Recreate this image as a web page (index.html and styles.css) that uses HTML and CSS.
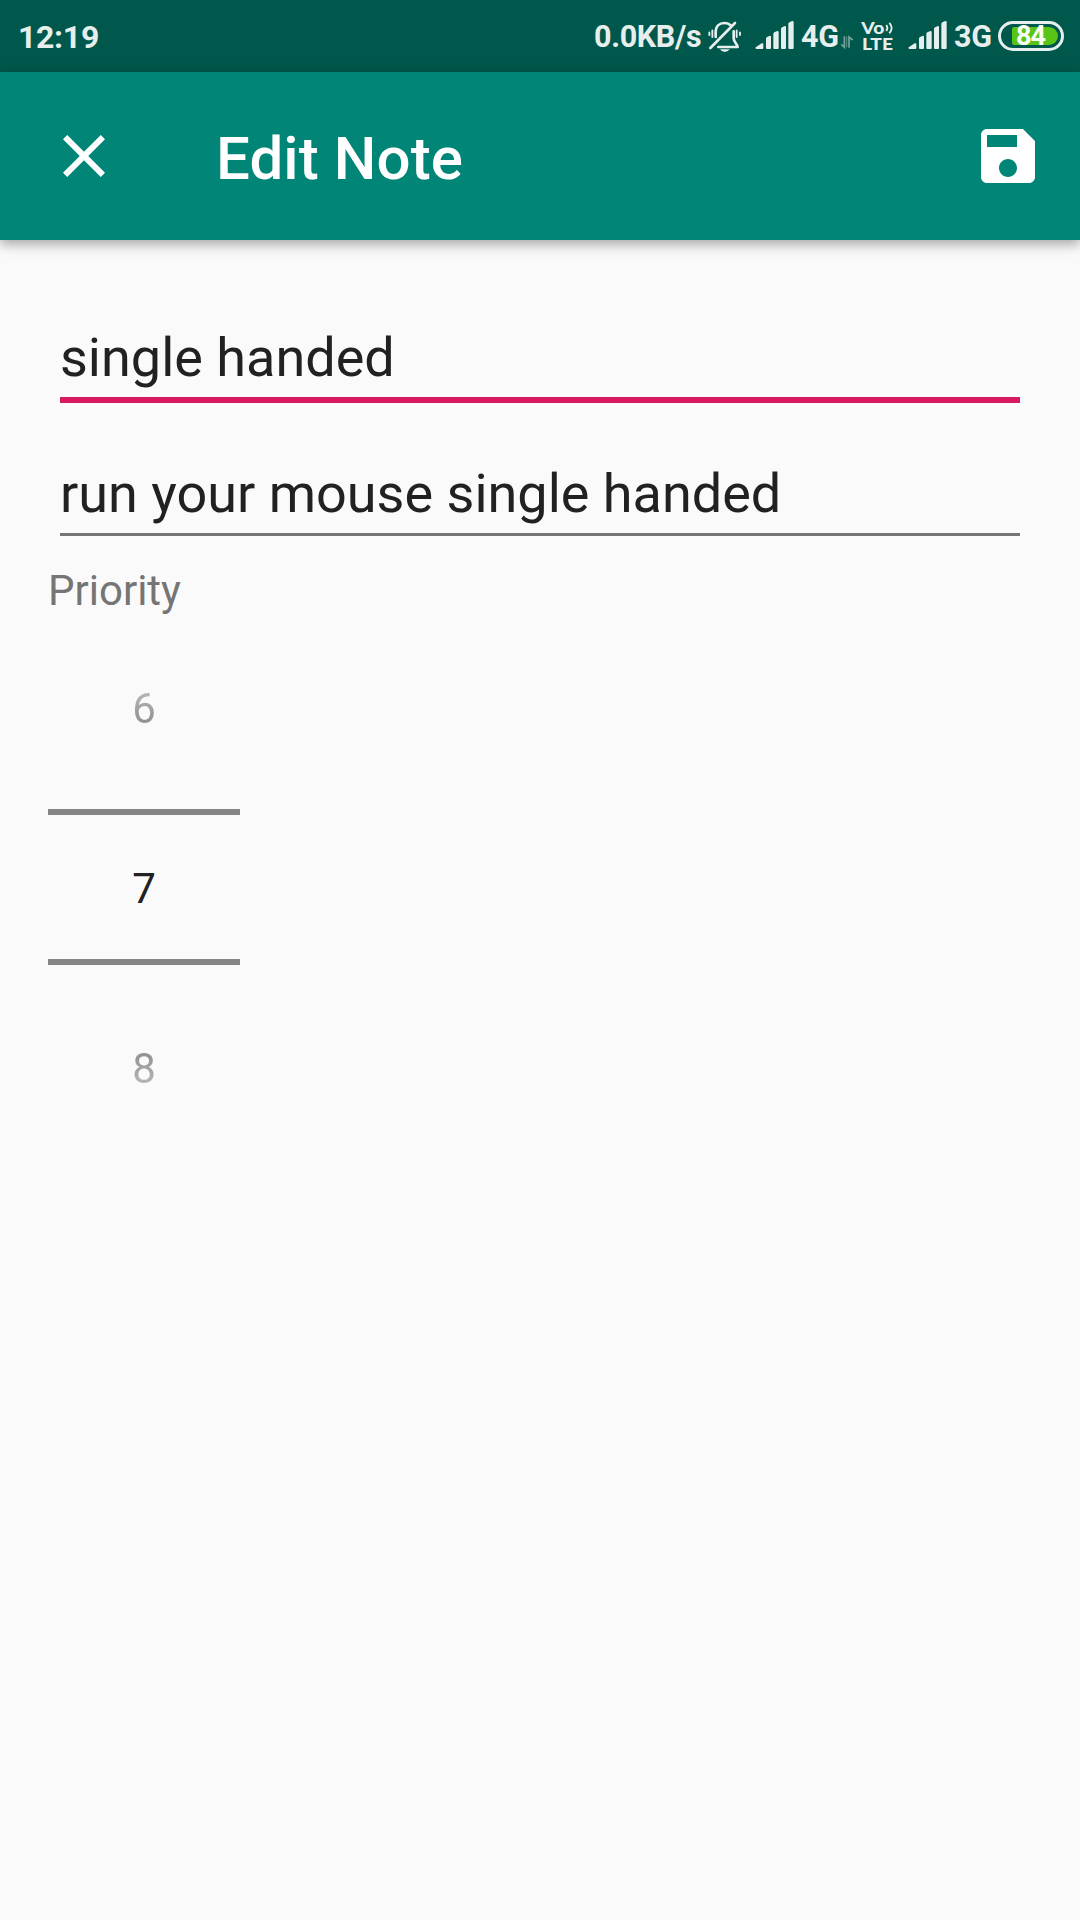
FILE: index.html
```
<!DOCTYPE html>
<html lang="en">
<head>
<meta charset="utf-8">
<title>Edit Note</title>
<link rel="stylesheet" href="styles.css">
</head>
<body>
<div class="status-bar">
  <span class="clock">12:19</span>
  <div class="indicators">
    <span class="speed">0.0KB/s</span>
    <svg class="bell" viewBox="384 60 105 99" aria-hidden="true">
      <g fill="none" stroke="currentColor" stroke-width="8" stroke-linecap="round">
        <path d="M465 69L391 144"/>
        <path d="M407 111V97C407 79 418 69 433 69C442 69 448 72 453 77"/>
        <path d="M461 94V115C461 127 472 131 473 141H415" stroke-linejoin="round"/>
        <path d="M388 97V105M397 91V111M470 91V111M480 97V105" stroke-width="5.500"/>
      </g>
      <path d="M420 148H449Q444 156 434.500 156Q425 156 420 148Z" fill="currentColor"/>
    </svg>
    <svg class="signal" viewBox="0 0 120 90" aria-hidden="true">
      <path d="M2 82L20 70Q25 68 25 73V84Q25 87 22 87H4Q0 86 2 82ZM33 56Q33 53 36 51L45 47Q48 47 48 50V84Q48 87 45 87H36Q33 87 33 84ZM55 42Q55 39 58 37L67 33Q71 33 71 36V84Q71 87 68 87H58Q55 87 55 84ZM78 27Q78 24 81 22L90 18Q93 18 93 21V84Q93 87 90 87H81Q78 87 78 84ZM100 12Q100 9 103 7L112 3Q116 3 116 6V84Q116 87 113 87H103Q100 87 100 84Z" fill="currentColor"/>
    </svg>
    <span class="network network-4g">4G</span>
    <svg class="arrows" viewBox="300 105 42 42" aria-hidden="true">
      <path d="M313 109V142L304 133M327 143V111L338 120" fill="none" stroke="currentColor" stroke-width="5"/>
      <path d="M320 109V142" fill="none" stroke="currentColor" stroke-width="2.500"/>
    </svg>
    <svg class="volte" viewBox="0 0 34 32" aria-hidden="true">
      <text x="0.300" y="13.500" textLength="23" lengthAdjust="spacingAndGlyphs">Vo</text>
      <text x="1" y="29.700" textLength="31" lengthAdjust="spacingAndGlyphs">LTE</text>
      <path d="M25.300 5Q27.500 8 25.300 11M28.300 2.800Q33 8 28.300 13.300" fill="none" stroke="currentColor" stroke-width="1.800"/>
    </svg>
    <svg class="signal signal-second" viewBox="0 0 120 90" aria-hidden="true">
      <path d="M2 82L20 70Q25 68 25 73V84Q25 87 22 87H4Q0 86 2 82ZM33 56Q33 53 36 51L45 47Q48 47 48 50V84Q48 87 45 87H36Q33 87 33 84ZM55 42Q55 39 58 37L67 33Q71 33 71 36V84Q71 87 68 87H58Q55 87 55 84ZM78 27Q78 24 81 22L90 18Q93 18 93 21V84Q93 87 90 87H81Q78 87 78 84ZM100 12Q100 9 103 7L112 3Q116 3 116 6V84Q116 87 113 87H103Q100 87 100 84Z" fill="currentColor"/>
    </svg>
    <span class="network network-3g">3G</span>
    <div class="battery"><div class="charge"><span class="level">84</span></div></div>
  </div>
</div>
<header class="app-bar">
  <svg class="icon" viewBox="0 0 24 24" role="img" aria-label="Close"><path d="M19 6.410L17.590 5 12 10.590 6.410 5 5 6.410 10.590 12 5 17.590 6.410 19 12 13.410 17.590 19 19 17.590 13.410 12z"/></svg>
  <h1 class="title">Edit Note</h1>
  <svg class="icon" viewBox="0 0 24 24" role="img" aria-label="Save"><path d="M17 3H5c-1.110 0-2 .9-2 2v14c0 1.100.89 2 2 2h14c1.100 0 2-.9 2-2V7l-4-4zm-5 16c-1.660 0-3-1.340-3-3s1.340-3 3-3 3 1.340 3 3-1.340 3-3 3zm3-10H5V5h10v4z"/></svg>
</header>
<main class="form">
  <div class="field field-focused">single handed</div>
  <div class="field">run your mouse single handed</div>
  <div class="label">Priority</div>
  <div class="picker">
    <div class="option option-prev">6</div>
    <div class="option option-current">7</div>
    <div class="option option-next">8</div>
  </div>
</main>
</body>
</html>
```
FILE: styles.css
```
* {
  box-sizing: border-box;
}

body {
  margin: 0;
  min-height: 1920px;
  background: #fafafa;
  color: #212121;
  font-family: Roboto, sans-serif;
}

svg {
  display: block;
  flex: none;
}

.status-bar {
  display: flex;
  justify-content: space-between;
  height: 72px;
  padding: 0 16px 0 18px;
  background: #00574b;
  color: #e6efed;
  font-weight: 700;
  white-space: nowrap;
}

.clock {
  font-size: 32px;
  line-height: 74px;
  letter-spacing: -0.3px;
}

.indicators {
  display: flex;
  align-items: flex-start;
}

.speed,
.network {
  font-size: 30.5px;
  line-height: 73px;
  letter-spacing: -0.35px;
}

.speed {
  width: 114px;
}

.bell {
  width: 35px;
  height: 33px;
  margin-top: 20px;
}

.signal {
  width: 40px;
  height: 30px;
  margin: 20px 0 0 12px;
}

.signal-second {
  margin-left: 13px;
}

.network {
  width: 39px;
  margin-left: 6px;
}

.arrows {
  width: 14px;
  height: 14px;
  margin-top: 35px;
  opacity: 0.5;
}

.volte {
  width: 34px;
  height: 32px;
  margin: 20px 0 0 7px;
  overflow: visible;
  fill: currentColor;
  font-family: Lato, sans-serif;
  font-size: 17.5px;
  font-weight: 900;
}

.network-3g {
  width: 38px;
}

.battery {
  width: 66px;
  height: 30px;
  margin: 21px 0 0 6px;
  padding: 3px;
  display: flex;
  justify-content: flex-end;
  border: 3px solid #e6efed;
  border-radius: 15px;
}

.charge {
  width: 46px;
  height: 18px;
  border-radius: 2px 9px 9px 2px;
  background: #58c516;
}

.level {
  display: block;
  padding-left: 4px;
  color: #fafdf8;
  font-size: 27px;
  line-height: 18px;
  letter-spacing: -1px;
}

.app-bar {
  display: flex;
  align-items: center;
  height: 168px;
  padding: 0 36px 0 48px;
  background: #008577;
  color: #fff;
  box-shadow: 0 4px 12px rgba(0, 0, 0, 0.36);
}

.icon {
  width: 72px;
  height: 72px;
  fill: currentColor;
}

.title {
  flex: 1;
  margin: 0 0 0 96px;
  padding-top: 5px;
  font-size: 60px;
  line-height: 72px;
  letter-spacing: 0.1px;
  font-weight: 500;
}

.form {
  padding: 78px 60px 0;
}

.field {
  height: 133px;
  padding-top: 59px;
  border-bottom: 3px solid #757575;
  font-size: 54px;
  line-height: 64px;
}

.field-focused {
  height: 85px;
  padding-top: 8px;
  border-bottom: 6px solid #d81b60;
}

.label {
  margin: 30px 0 0 -12px;
  color: #757575;
  font-size: 42px;
  line-height: 49px;
}

.picker {
  width: 192px;
  margin: 14px 0 0 -12px;
  font-size: 42px;
  text-align: center;
}

.option {
  height: 180px;
  line-height: 160px;
}

.option-prev,
.option-next {
  color: transparent;
  background-clip: text;
}

.option-prev {
  background-image: linear-gradient(#b5b5b5 64px, #8e8e8e 96px);
}

.option-current {
  height: 156px;
  border-top: 6px solid #858585;
  border-bottom: 6px solid #858585;
  line-height: 148px;
}

.option-next {
  height: 208px;
  line-height: 208px;
  background-image: linear-gradient(#8e8e8e 86px, #b5b5b5 118px);
}
```
